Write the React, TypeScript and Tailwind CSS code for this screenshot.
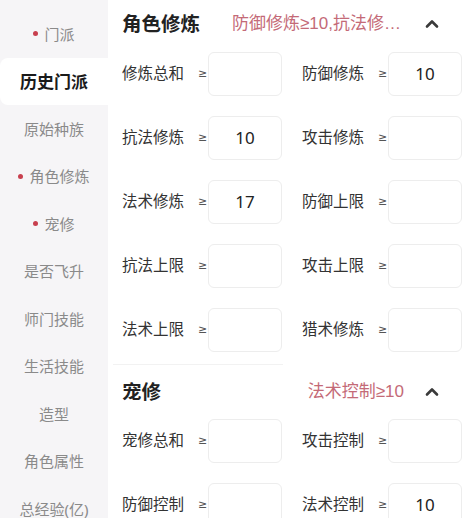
const FONT = { fontFamily: '"Noto Sans", "Noto Sans CJK SC", sans-serif' };

type Field = { label: string; value?: string };

const sideItems: { name: string; dot?: boolean; active?: boolean }[] = [
  { name: '门派', dot: true },
  { name: '历史门派', active: true },
  { name: '原始种族' },
  { name: '角色修炼', dot: true },
  { name: '宠修', dot: true },
  { name: '是否飞升' },
  { name: '师门技能' },
  { name: '生活技能' },
  { name: '造型' },
  { name: '角色属性' },
  { name: '总经验(亿)' },
];

const roleFields: Field[] = [
  { label: '修炼总和' },
  { label: '防御修炼', value: '10' },
  { label: '抗法修炼', value: '10' },
  { label: '攻击修炼' },
  { label: '法术修炼', value: '17' },
  { label: '防御上限' },
  { label: '抗法上限' },
  { label: '攻击上限' },
  { label: '法术上限' },
  { label: '猎术修炼' },
];

const petFields: Field[] = [
  { label: '宠修总和' },
  { label: '攻击控制' },
  { label: '防御控制' },
  { label: '法术控制', value: '10' },
];

function ChevronUp() {
  return (
    <svg width="14" height="10" viewBox="0 0 14 10" fill="none">
      <path d="M2 7.5 7 2.5l5 5" stroke="#3a3a3a" strokeWidth="2.6" strokeLinecap="round" strokeLinejoin="round" />
    </svg>
  );
}

function SectionHeader({ title, summary }: { title: string; summary: string }) {
  return (
    <div className="flex h-12 min-w-0 items-center pr-[11px]">
      <h2 className="shrink-0 text-[19.5px] font-bold text-[#222]">{title}</h2>
      <p className="ml-8 min-w-0 flex-1 truncate text-right font-['Liberation_Sans','Noto_Sans_CJK_SC',sans-serif] text-[17px] text-[#c46a77]">
        {summary}
      </p>
      <div className="flex w-[56px] shrink-0 justify-center">
        <ChevronUp />
      </div>
    </div>
  );
}

function FieldGrid({ fields }: { fields: Field[] }) {
  return (
    <div className="grid grid-cols-[160px_160px] gap-x-5 gap-y-5">
      {fields.map((field) => (
        <div className="flex items-center" key={field.label}>
          <span className="w-[76px] text-[15.5px] text-[#333]">{field.label}</span>
          <span className="w-[10px] font-['DejaVu_Sans'] text-[11px] text-[#555]">≥</span>
          <div className="flex h-11 w-[74px] items-center justify-center rounded-md border border-[#ededed] bg-white text-[17px] text-[#222]">
            {field.value}
          </div>
        </div>
      ))}
    </div>
  );
}

export default function App() {
  return (
    <div className="flex h-[518px] w-[471px] overflow-hidden bg-white" style={FONT}>
      <aside className="w-[108px] shrink-0 bg-[#f6f5f7] pt-[10px]">
        {sideItems.map((item) => (
          <div
            className={
              item.active
                ? 'flex h-[47.5px] items-center justify-center rounded-l-lg bg-white text-[17px] font-bold text-[#1a1a1a]'
                : 'flex h-[47.5px] items-center justify-center text-[15px] text-[#8a8a8a]'
            }
            key={item.name}
          >
            {item.dot ? <span className="mr-[6px] h-[5px] w-[5px] rounded-full bg-[#c8404f]" /> : null}
            {item.name}
          </div>
        ))}
      </aside>

      <main className="min-w-0 flex-1 overflow-hidden pl-[14px]">
        <SectionHeader summary="防御修炼≥10,抗法修炼≥10,法术修炼≥17" title="角色修炼" />
        <div className="mt-1">
          <FieldGrid fields={roleFields} />
        </div>

        <div className="ml-[-9px] mt-3 h-px w-[170px] bg-[#f2f2f2]" />

        <div className="mt-[3px]">
          <SectionHeader summary="法术控制≥10" title="宠修" />
        </div>
        <div className="mt-[3px]">
          <FieldGrid fields={petFields} />
        </div>
      </main>
    </div>
  );
}
